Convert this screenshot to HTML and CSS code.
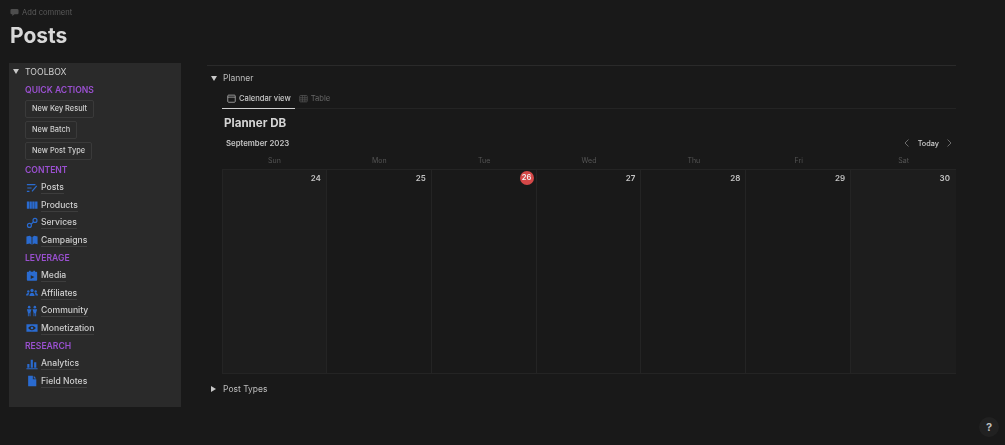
FILE: index.html
```html
<!DOCTYPE html>
<html lang="en">
<head>
<meta charset="utf-8">
<title>Posts</title>
<link rel="stylesheet" href="styles.css">
</head>
<body>
<div class="page">
  <div class="comment">
    <svg class="comment-ico" viewBox="0 0 10 10"><path d="M2 1h6a1.500 1.500 0 0 1 1.500 1.500v3A1.500 1.500 0 0 1 8 7H5L2.500 9V7H2A1.500 1.500 0 0 1 .5 5.500v-3A1.500 1.500 0 0 1 2 1z"/></svg>
    <span>Add comment</span>
  </div>
  <h1 class="title">Posts</h1>
  <div class="columns">
    <aside class="toolbox">
      <div class="tb-head"><span class="tri-down"></span><span>TOOLBOX</span></div>
      <div class="tb-body">
        <div class="sec">QUICK ACTIONS</div>
        <div class="btn">New Key Result</div>
        <div class="btn">New Batch</div>
        <div class="btn last">New Post Type</div>
        <div class="sec">CONTENT</div>
        <div class="link"><svg class="ico" viewBox="0 0 14 14"><path class="st" d="M1 3h10M1.500 7h5M1 11h3"/><path class="st" d="M7 11l5.500-6.500"/></svg><span>Posts</span></div>
        <div class="link"><svg class="ico" viewBox="0 0 14 14"><path d="M1 3h2.800v8.500H1zM4.300 3h2.500v8.500H4.300zM7.300 3h2.800v8.500H7.300zM10.600 3h2.800v8.500h-2.800z"/></svg><span>Products</span></div>
        <div class="link"><svg class="ico" viewBox="0 0 14 14"><circle class="st" cx="4" cy="9.800" r="2.300"/><circle class="st" cx="10.500" cy="4" r="2.300"/><path class="st" d="M6 8.500l2.500-2.500"/></svg><span>Services</span></div>
        <div class="link"><svg class="ico" viewBox="0 0 14 14"><path d="M.5 3l3.800-1 2.200 1.500v9L4.300 11 .5 12zM7.500 3.500L9.700 2l3.800 1v9l-3.800-1-2.200 1.500z"/></svg><span>Campaigns</span></div>
        <div class="sec">LEVERAGE</div>
        <div class="link"><svg class="ico" viewBox="0 0 14 14"><path fill-rule="evenodd" d="M2 2h1.500V1h2v1h3V1h2v1H12a1 1 0 0 1 1 1v8.500a1 1 0 0 1-1 1H2a1 1 0 0 1-1-1V3a1 1 0 0 1 1-1zM5.500 6v4.500L9.800 8.200z"/></svg><span>Media</span></div>
        <div class="link"><svg class="ico" viewBox="0 0 14 14"><circle cx="7" cy="4" r="1.900"/><circle cx="2.700" cy="5.300" r="1.400"/><circle cx="11.300" cy="5.300" r="1.400"/><path d="M4 10.500c0-2 1.300-3.700 3-3.700s3 1.700 3 3.700zM0 10c0-1.600 1.200-3 2.700-3 .4 0 .6.100.9.200C3 8 2.800 9 2.800 10zM14 10c0-1.600-1.200-3-2.700-3-.4 0-.6.100-.9.200.6.800.8 1.800.8 2.800z"/></svg><span>Affiliates</span></div>
        <div class="link"><svg class="ico" viewBox="0 0 14 14"><circle cx="3.700" cy="2.500" r="1.500"/><circle cx="10.300" cy="2.500" r="1.500"/><path d="M1 5h5.400l-1.200 4v4H4.200v-3.500h-1V13h-1V9zM7.600 5H13l-1.200 4v4h-1V9.500h-1V13h-1V9z"/></svg><span>Community</span></div>
        <div class="link"><svg class="ico" viewBox="0 0 14 14"><path fill-rule="evenodd" d="M.5 2.500h13v9H.5zM7 4.500C5 4.500 3.500 6 2.500 7 3.500 8 5 9.500 7 9.500S10.500 8 11.500 7C10.500 6 9 4.500 7 4.500zM7 5.500a1.500 1.500 0 1 1 0 3 1.500 1.500 0 0 1 0-3z"/></svg><span>Monetization</span></div>
        <div class="sec">RESEARCH</div>
        <div class="link"><svg class="ico" viewBox="0 0 14 14"><path d="M.5 12h13v1H.5zM1.500 7h2.500v4.500H1.500zM5.500 2h2.500v9.500H5.500zM9.500 5h2.500v6.500H9.500z"/></svg><span>Analytics</span></div>
        <div class="link"><svg class="ico" viewBox="0 0 14 14"><path d="M2.500 1H8v4h4v8H2.500zM9 1l3 3H9z"/></svg><span>Field Notes</span></div>
      </div>
    </aside>
    <main class="main">
      <div class="toggle planner-toggle"><span class="tri-down"></span><span>Planner</span></div>
      <div class="inner">
        <div class="tabs">
          <div class="tab active">
            <svg class="tab-ico" viewBox="0 0 12 12"><rect x="1" y="1.500" width="10" height="9.500" rx="1.200"/><path d="M1 4.200h10"/></svg>
            <span>Calendar view</span>
          </div>
          <div class="tab">
            <svg class="tab-ico" viewBox="0 0 12 12"><rect x="1" y="2" width="10" height="8.500" rx="1"/><path d="M1 5h10M1 7.800h10M4.500 2v8.500M7.800 2v8.500"/></svg>
            <span>Table</span>
          </div>
        </div>
        <div class="db">Planner DB</div>
        <div class="cal-bar">
          <span class="month">September 2023</span>
          <div class="nav">
            <svg class="chev" viewBox="0 0 8 10"><path d="M5.500 1.500L2 5l3.500 3.500"/></svg>
            <span class="today">Today</span>
            <svg class="chev" viewBox="0 0 8 10"><path d="M2.500 1.500L6 5 2.500 8.500"/></svg>
          </div>
        </div>
        <div class="weekdays"><span>Sun</span><span>Mon</span><span>Tue</span><span>Wed</span><span>Thu</span><span>Fri</span><span>Sat</span></div>
        <div class="grid">
          <div class="day wk"><span>24</span></div>
          <div class="day"><span>25</span></div>
          <div class="day"><span class="now">26</span></div>
          <div class="day"><span>27</span></div>
          <div class="day"><span>28</span></div>
          <div class="day"><span>29</span></div>
          <div class="day wk"><span>30</span></div>
        </div>
      </div>
      <div class="toggle types-toggle"><span class="tri-right"></span><span>Post Types</span></div>
    </main>
  </div>
  <div class="help">?</div>
</div>
</body>
</html>
```
FILE: styles.css
```css
* { box-sizing: border-box; }
html, body { margin: 0; height: 100%; }
body {
  background: #191919;
  color: #d4d4d4;
  font-family: Inter, "Liberation Sans", sans-serif;
  overflow: hidden;
}
.page { position: relative; height: 445px; padding: 7px 49px 0 9px; filter: blur(.35px); }
.comment { display: flex; align-items: center; gap: 3px; height: 11px; padding-left: 1px; font-size: 7.600px; color: #5a5a5a; }
.comment-ico { width: 9px; height: 9px; fill: #4d4d4d; }
.title { margin: 4px 0 0 1px; font-size: 21px; line-height: 27px; font-weight: 700; color: #d8d8d8; }
.columns { display: flex; gap: 26px; margin-top: 14px; }
.toolbox { flex: 0 0 172px; height: 344px; background: #2a2a2a; }
.tb-head { display: flex; align-items: center; gap: 6px; height: 17.500px; padding-left: 4px; font-size: 8.700px; color: #cfcfcf; }
.tb-body { padding-left: 16px; }
.sec { height: 17.600px; line-height: 18px; font-size: 8.600px; font-weight: 600; color: #9a50d0; }
.sec + .btn { margin-top: 1.500px; }
.btn { display: table; height: 18px; margin-bottom: 3px; padding: 0 6px; line-height: 16px; font-size: 7.400px; font-weight: 500; color: #cfcfcf; border: 1px solid #3a3a3a; border-radius: 2px; }
.btn.last { margin-bottom: 1.600px; }
.link { display: flex; align-items: center; height: 17.600px; gap: 3px; padding-left: 1px; font-size: 8.600px; font-weight: 500; color: #cfcfcf; }
.link span { border-bottom: 1px solid #3d3d3d; line-height: 12px; }
.ico { width: 12px; height: 12px; fill: #2a6bd0; flex: none; }
.ico .st { fill: none; stroke: #2a6bd0; stroke-width: 1.400; }
.tri-down { width: 0; height: 0; border-left: 3px solid transparent; border-right: 3px solid transparent; border-top: 5px solid #c8c8c8; flex: none; }
.tri-right { width: 0; height: 0; border-top: 3px solid transparent; border-bottom: 3px solid transparent; border-left: 5px solid #c8c8c8; flex: none; margin-right: 1px; }
.main { flex: 1; min-width: 0; border-top: 1px solid #2a2a2a; margin-top: 2px; }
.toggle { display: flex; align-items: center; gap: 6px; height: 14px; padding-left: 4px; font-size: 8.500px; color: #bdbdbd; }
.planner-toggle { margin-top: 5px; }
.inner { margin-left: 15px; }
.tabs { display: flex; height: 24px; border-bottom: 1px solid #242424; }
.tab { display: flex; align-items: center; gap: 3px; height: 24px; padding: 3px 4px 0 5px; font-size: 7.600px; color: #666; border-bottom: 1px solid transparent; }
.tab + .tab { padding-left: 4px; }
.tab.active { color: #c8c8c8; font-weight: 500; border-bottom-color: #cfcfcf; }
.tab-ico { width: 9px; height: 9px; fill: none; stroke: #555; stroke-width: 1; }
.tab.active .tab-ico { stroke: #bbb; }
.db { margin: 6px 0 0 2px; font-size: 11.600px; line-height: 16px; font-weight: 700; color: #d4d4d4; }
.cal-bar { display: flex; justify-content: space-between; align-items: center; height: 14px; margin-top: 5px; padding: 0 3px 0 4px; }
.month { font-size: 7.800px; font-weight: 600; color: #c4c4c4; }
.nav { display: flex; align-items: center; gap: 6px; }
.nav .chev:first-child { margin-right: 1px; }
.today { font-size: 7.300px; font-weight: 500; color: #cdcdcd; }
.chev { width: 8px; height: 10px; fill: none; stroke: #6a6a6a; stroke-width: 1; }
.weekdays { display: grid; grid-template-columns: repeat(7, 1fr); height: 19px; padding-top: 1px; align-items: center; text-align: center; font-size: 7px; color: #555; }
.grid { display: grid; grid-template-columns: repeat(7, 1fr); height: 205px; border-top: 1px solid #242424; border-bottom: 1px solid #242424; }
.day { display: flex; justify-content: flex-end; align-items: flex-start; padding: 1px 5px 0 0; border-right: 1px solid #242424; font-size: 8px; font-weight: 600; color: #c4c4c4; }
.day:first-child { border-left: 1px solid #242424; }
.day:last-child { border-right: 0; padding-right: 6px; }
.day span { line-height: 14px; }
.day.wk { background: #1d1d1d; }
.day .now { width: 14px; height: 14px; margin-right: -3px; border-radius: 50%; background: #d44848; color: #f2f2f2; text-align: center; font-size: 7.600px; }
.types-toggle { margin-top: 8px; }
.help { position: absolute; right: 6px; top: 417px; width: 20px; height: 20px; border-radius: 50%; background: #212121; color: #bdbdbd; font-size: 11px; font-weight: 700; line-height: 20px; text-align: center; }
```
